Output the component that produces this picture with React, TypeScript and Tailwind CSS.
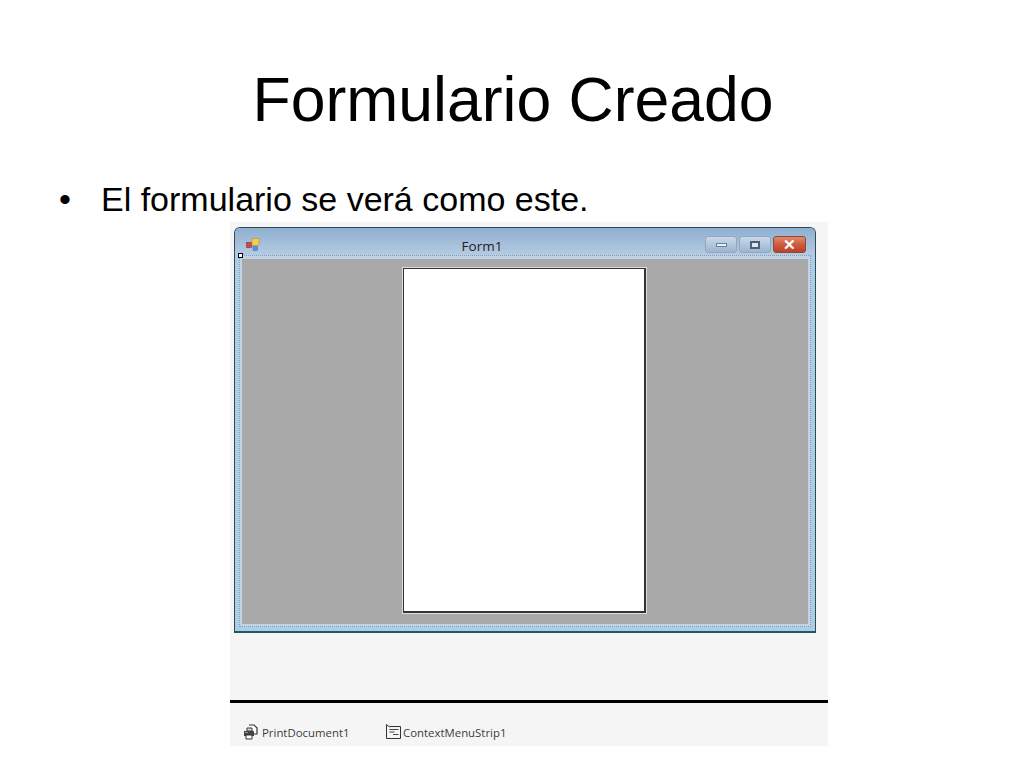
import React from "react";

const PrintIcon = () => (
  <svg width="16" height="16" viewBox="0 0 16 16" className="shrink-0">
    <path d="M6 1h5l3 3v6h-3" fill="#fff" stroke="#333" strokeWidth="1.2" />
    <path d="M4 4h5v3H4z" fill="#ddd" stroke="#333" />
    <path d="M1 7h10v5H1z" fill="#444" />
    <path d="M3 11h6v4H3z" fill="#fff" stroke="#333" />
    <path d="M2 8h3v1H2z" fill="#999" />
  </svg>
);

const MenuIcon = () => (
  <svg width="16" height="16" viewBox="0 0 16 16" className="shrink-0">
    <path d="M1.5 0.5v14h14V2.5H4.5" fill="#f5f5f5" stroke="#333" />
    <path d="M4.5 5.5h9M4.5 8h5M8 10.5h5.5" stroke="#444" />
    <path d="M1.5 0.5l3 2.5" stroke="#333" />
  </svg>
);

const FormIcon = () => (
  <svg width="14" height="13" viewBox="0 0 14 13" className="shrink-0">
    <rect x="0.5" y="4.5" width="5" height="5" fill="#c84a4a" stroke="#8a3030" strokeWidth="0.6" />
    <rect x="6" y="0.5" width="7" height="7" rx="1" fill="#f2ce50" stroke="#c49a26" strokeWidth="0.7" />
    <rect x="7" y="8.5" width="4.5" height="4" fill="#5a8fe0" stroke="#3d6db8" strokeWidth="0.5" />
  </svg>
);

const CaptionButton = ({ children }: { children: React.ReactNode }) => (
  <div className="w-[32px] h-[17px] rounded-[3px] border border-[#93a7c0] bg-gradient-to-b from-[#c9d9ea] via-[#b3c8df] to-[#9cb4d2] flex items-center justify-center">
    {children}
  </div>
);

export default function App() {
  return (
    <div className="w-[1024px] h-[768px] bg-white overflow-hidden font-['Liberation_Sans',Arial,sans-serif] text-black">
      <h1 className="pt-[62px] h-[165px] text-center text-[62.5px] leading-[74px] pl-[2px]">
        Formulario Creado
      </h1>
      <div className="flex items-center h-[46px] mt-[11px] text-[34px] leading-[38px]">
        <span className="w-[101px] pl-[59px]">•</span>
        <span>El formulario se verá como este.</span>
      </div>

      {/* designer capture */}
      <div className="ml-[230px] w-[598px] h-[524px] bg-[#f5f5f5] flex flex-col">
        <div className="ml-[4px] mt-[5px] w-[582px] h-[406px] rounded-t-[6px] border border-[#2f4a55] border-b-2 border-b-[#1f5566] bg-[#a9cfe6] flex flex-col">
          <div className="h-[27px] rounded-t-[5px] bg-gradient-to-b from-[#8fafd0] to-[#b5cbe3] flex items-center pt-[6px] pl-[11px] pr-[9px] relative">
            <FormIcon />
            <div className="flex-1 text-center text-[13.5px] text-[#222] font-['Open_Sans',sans-serif] pt-[4px] pr-[1px]">
              Form1
            </div>
            <div className="flex gap-[2px]">
              <CaptionButton>
                <div className="w-[11px] h-[4px] bg-[#e8eef5] border border-[#6f7f95]" />
              </CaptionButton>
              <CaptionButton>
                <div className="w-[10px] h-[8px] bg-[#dfe7f0] border-2 border-[#4d5d73]" />
              </CaptionButton>
              <div className="w-[33px] h-[17px] rounded-[3px] border border-[#8a4a3c] bg-gradient-to-b from-[#e08a70] via-[#cf5a3c] to-[#b8432c] flex items-center justify-center text-white text-[15px] leading-none font-bold">
                ✕
              </div>
            </div>
            <div className="absolute left-[3px] bottom-[-3px] w-[5px] h-[5px] bg-white border border-black" />
          </div>
          <div className="flex-1 mx-[4px] mb-[4px] border-[1px] border-[#8a9bb0] border-dotted bg-[#c3d3e6] pt-[3px] px-[2px] pb-[2px]">
            <div className="h-full bg-[#a9a9a9] flex justify-center pt-[9px] pb-[11px] pr-[1px]">
              <div className="w-[243px] bg-white border border-[#333] border-r-2 border-b-2 outline outline-1 outline-[#ddd]" />
            </div>
          </div>
        </div>
        <div className="mt-[67px] h-[3px] bg-black shrink-0" />
        <div className="flex items-center h-[43px] pt-[16px] pl-[13px] text-[11.4px] text-[#3c3c3c] font-['Open_Sans',sans-serif]">
          <div className="flex items-center gap-[3px] w-[142px]">
            <PrintIcon />
            <span>PrintDocument1</span>
          </div>
          <div className="flex items-center gap-[2px]">
            <MenuIcon />
            <span>ContextMenuStrip1</span>
          </div>
        </div>
      </div>
    </div>
  );
}
